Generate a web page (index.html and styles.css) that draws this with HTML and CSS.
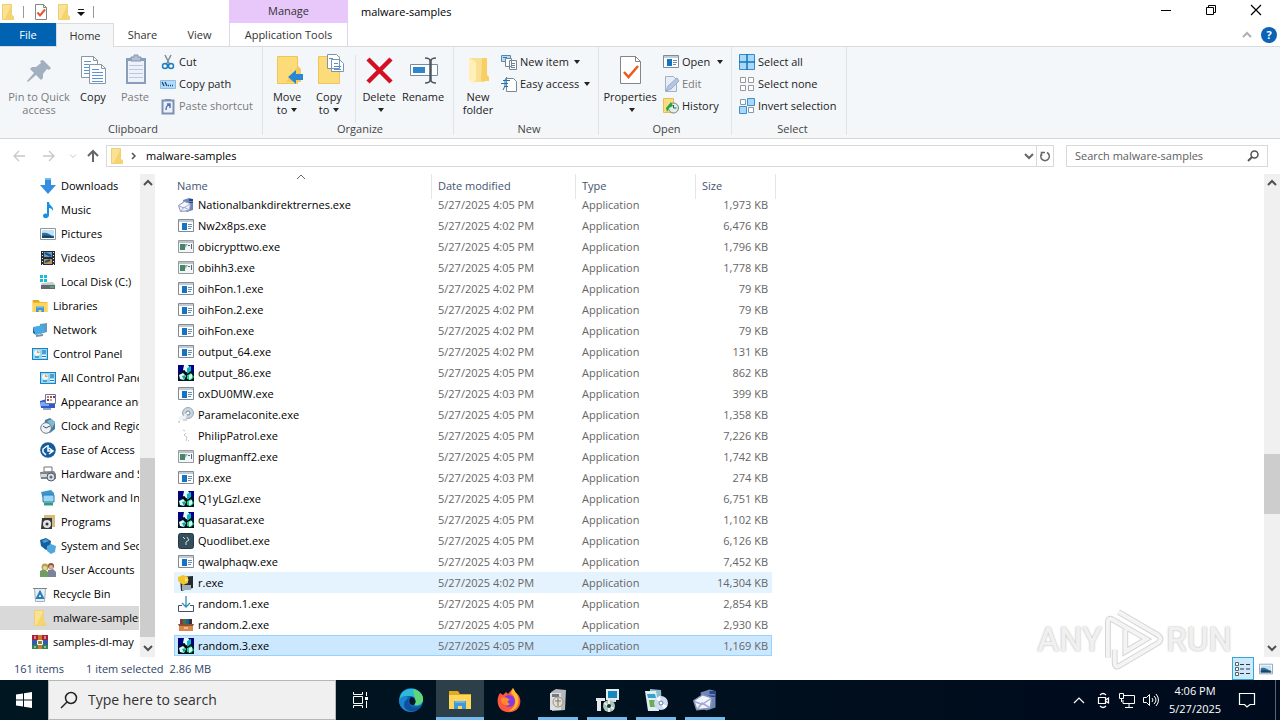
FILE: index.html
```html
<!DOCTYPE html>
<html lang="en">
<head>
<meta charset="utf-8">
<title>malware-samples</title>
<link rel="stylesheet" href="styles.css">
</head>
<body>
<svg class="sprite" aria-hidden="true">
  <symbol id="folder" viewBox="0 0 16 16"><path d="M2.500.5h9v10.500l2 1.500v3h-11z" fill="#fbe293" stroke="#efcf74"/><path d="M11.500 1v11l2 .5v3H4.500z" fill="#f5d36d"/></symbol>
  <symbol id="check" viewBox="0 0 16 16"><path d="M2.500.5h8l3 3v12h-11z" fill="#fff" stroke="#858585"/><path d="M10.500.5v3h3" fill="none" stroke="#858585"/><path d="M4.500 8.500l2.500 3 5-6" fill="none" stroke="#e8552c" stroke-width="2"/></symbol>
  <symbol id="pages" viewBox="0 0 32 32"><g fill="#fff" stroke="#8c97a5"><path d="M4.500 2.500h12l4 4v17h-16z"/><path d="M12.500 10.500h12l4 4v15h-16z"/><path d="M24.500 10.500v4h4M16.500 2.500v4h4" fill="none"/></g><path d="M7 7.500h7M7 10.500h5M7 13.500h5M7 16.500h5M7 19.500h5M15 15.500h7M15 18.500h11M15 21.500h11M15 24.500h11M15 27.500h11" stroke="#5a94d8"/></symbol>
  <symbol id="app" viewBox="0 0 16 16"><path d="M.5 1.500h15v12H.5z" fill="#fff" stroke="#7e8b98"/><path d="M1 2h14v2H1z" fill="#c3cad1"/><path d="M4 5h5v7H4z" fill="#1673c4"/><path d="M10 6.500h4M10 8.500h4M10 10.500h3" stroke="#6a8eae"/></symbol>
  <symbol id="appgreen" viewBox="0 0 16 16"><path d="M.5 1.500h15v12H.5z" fill="#f4f6f5" stroke="#969da2"/><path d="M1 2h14v2H1z" fill="#bcc3c5"/><path d="M2 5h5v6H2z" fill="#47856e"/><path d="M7 5h3L7 9z" fill="#86b6a0"/><path d="M10 6.500h2M13.500 5v5" stroke="#568"/></symbol>
  <symbol id="cubes" viewBox="0 0 16 16"><path d="M0 0h16v16H0z" fill="#000080"/><path d="M0 16V9l6-4 3 3 3-3 4 3v8z" fill="#00121e"/><path d="M6 0h4l3 4-3 4-5-3z" fill="#e8fdff"/><path d="M9 3l4-2v5l-4 3z" fill="#10b5c4"/><path d="M1 10l4-2 3 3-2 4-4-1z" fill="#d6fbff"/><path d="M4 11l4-1-2 5z" fill="#0aa78b"/><path d="M9 10l4-2 3 4-3 3-4-1z" fill="#17d68e"/><path d="M11 10l3-1v4l-3 2z" fill="#d9fff4"/><path d="M6 5l2 5 4-2" stroke="#000" fill="none"/></symbol>
  <symbol id="server" viewBox="0 0 16 16"><path d="M5 3l6-2 4 1v11l-6 2-2-1z" fill="#6d87b8"/><path d="M11 2h4v2h-4zM10 5h5v1h-5z" fill="#27468c"/><path d="M.5 8.500l6-4 6 2-1 7-9 1z" fill="#f3f5fc" stroke="#8794b8"/><path d="M1 9l5 2 6-4M3 14l3-4 5 3" fill="none" stroke="#a1a8cf"/></symbol>
  <symbol id="panel" viewBox="0 0 16 16"><path d="M0 2h16v12H0z" fill="#1c82c5"/><path d="M1 3h14v10H1z" fill="#92d9f7"/><circle cx="5" cy="7" r="3" fill="#eaf8ff"/><path d="M5 7V4l3 3z" fill="#ee9f30"/><path d="M10 5h4M10 7h4M3 11h4" stroke="#185f9b"/><path d="M10 9h4v3h-4z" fill="#fff"/><path d="M10 10.500h4" stroke="#1a76bb"/></symbol>
  <symbol id="disc" viewBox="0 0 16 16"><circle cx="10" cy="6" r="5.500" fill="#cbd5e0" stroke="#9aa9bc"/><circle cx="10" cy="6" r="2" fill="#fff" stroke="#71839d"/><path d="M1 10l8-4-1 6-7 2z" fill="#edf2f7"/><path d="M4 5l2 4M5 13h4M1 14v2" stroke="#a6b1bf"/></symbol>
  <symbol id="picture" viewBox="0 0 16 16"><path d="M.5 2.500h15v11H.5z" fill="#fff" stroke="#8b99a5"/><path d="M2 4h12v8H2z" fill="#bfe2f8"/><path d="M2 7q4-1 7 1t5 2v2H2z" fill="#386e9c"/><path d="M2 10q6-2 12 1v1H2z" fill="#16476a"/></symbol>
  <symbol id="explorer" viewBox="0 0 24 24"><path d="M1 3h9l2 3h11v15H1z" fill="#e6a91d"/><path d="M1 7h22v14H1z" fill="#ffd65c"/><path d="M6 21v-8h12v8h-4v-3h-4v3z" fill="#4199da"/><path d="M7 13h10v2H7z" fill="#67b7ee"/></symbol>
  <symbol id="down" viewBox="0 0 12 12"><path d="M2 4l4 4 4-4" fill="none" stroke="currentColor" stroke-width="2"/></symbol>
  <symbol id="up" viewBox="0 0 12 12"><path d="M2 8l4-4 4 4" fill="none" stroke="currentColor" stroke-width="2"/></symbol>
</svg>

<div class="window">
  <header class="titlebar">
    <div class="quick">
      <svg class="i16"><use href="#folder"/></svg><span class="bar"></span>
      <button class="plain" aria-label="Properties"><svg class="i16"><use href="#check"/></svg></button>
      <button class="plain" aria-label="New folder"><svg class="i16"><use href="#folder"/></svg></button>
      <button class="plain customize" aria-label="Customize toolbar"><svg class="i10" viewBox="0 0 10 10"><path d="M2 2.500h6" stroke="#222"/><path d="M1 5h8L5 9z" fill="#111"/></svg></button><span class="bar"></span>
    </div>
    <div class="manage">Manage</div>
    <h1>malware-samples</h1>
    <div class="winbtns">
      <button class="plain" aria-label="Minimize"><svg class="i12" viewBox="0 0 12 12"><path d="M1 6.500h10" stroke="#000"/></svg></button>
      <button class="plain" aria-label="Restore"><svg class="i12" viewBox="0 0 12 12"><path d="M1.500 3.500h7v7h-7zM3.500 3.500v-2h7v7h-2" fill="none" stroke="#000"/></svg></button>
      <button class="plain" aria-label="Close"><svg class="i12" viewBox="0 0 12 12"><path d="M1 1l10 10M11 1L1 11" stroke="#000" stroke-width="1.200"/></svg></button>
    </div>
  </header>
  <nav class="tabs">
    <button class="file">File</button><button class="home">Home</button><button class="tab">Share</button><button class="tab">View</button><button class="apptools">Application Tools</button>
    <div class="tabs-end">
      <button class="plain" aria-label="Collapse ribbon"><svg class="i12 grey"><use href="#up"/></svg></button>
      <button class="help" aria-label="Help">?</button>
    </div>
  </nav>

  <section class="ribbon">
    <div class="group clipboard">
      <div class="tools">
        <button class="big w70 off"><svg class="i32" viewBox="0 0 32 32"><path d="M20 6l8 8-2 2-2-1-4 5 0 4-2 2-5-5-8 7-1-1 7-8-4-4 2-2 4 0 5-4-1-2z" fill="#a2afc0"/></svg><span>Pin to Quick<br>access</span></button>
        <button class="big w38"><svg class="i32"><use href="#pages"/></svg><span>Copy</span></button>
        <button class="big w46 off"><svg class="i32" viewBox="0 0 32 32"><path d="M7 4h20v26H7z" fill="#8a9dbb"/><path d="M9 7h16v21H9z" fill="#edf2fa"/><path d="M12 3h3V1h4v2h3v4H12z" fill="#b2bfd2" stroke="#8395b1"/><path d="M10 11.500h14M10 15.500h14M10 19.500h14M10 23.500h14" stroke="#bdcadd"/></svg><span>Paste</span></button>
        <div class="smalls">
          <button class="small"><svg class="i16" viewBox="0 0 16 16"><path d="M5 1l5 10M11 1L6 11" stroke="#7e8d9c" stroke-width="1.500"/><circle cx="5" cy="12" r="2.500" fill="none" stroke="#1d81bf" stroke-width="1.500"/><circle cx="11" cy="12" r="2.500" fill="none" stroke="#1d81bf" stroke-width="1.500"/></svg>Cut</button>
          <button class="small"><svg class="i16" viewBox="0 0 16 16"><path d="M.5 4.500h15v8H.5z" fill="#b6dafa" stroke="#8dbce4"/><path d="M2 6l2 4M5 6l2 4M8 9.500h1M10 9.500h1M12 9.500h1" stroke="#174b79" stroke-width="1.300"/></svg>Copy path</button>
          <button class="small off"><svg class="i16" viewBox="0 0 16 16"><path d="M2.500 2.500h11v13h-11z" fill="#eaf0fb" stroke="#7f91b3" stroke-width="2"/><path d="M5 1h6v2H5z" fill="#7f91b3"/><path d="M6 12c0-4 1-5 4-5M7 6h3v4" fill="none" stroke="#5275aa" stroke-width="1.500"/></svg>Paste shortcut</button>
        </div>
      </div><h2>Clipboard</h2>
    </div>
    <div class="group organize">
      <div class="tools">
        <button class="big w40"><svg class="i32" viewBox="0 0 32 32"><path d="M6.500 2.500h20v27h-20z" fill="#fbdc79" stroke="#edc55b"/><path d="M27 12l3 3v13H15z" fill="#f4ca60"/><path d="M17 23l8-7v4h7v6h-7v4z" fill="#2b88d0"/></svg><span>Move<br>to<i class="caret"></i></span></button>
        <button class="big w44"><svg class="i32" viewBox="0 0 32 32"><path d="M5.500 2.500h21v27h-21z" fill="#fbdc79" stroke="#edc55b"/><g fill="#fff" stroke="#7c95ae"><path d="M14.500.5h9l3 3v11h-12zM18.500 5.500h8l4 4v8h-12z"/></g><path d="M21 9.500h4M21 12.500h7M21 15.500h7M16 4.500h4" stroke="#4e91d6"/></svg><span>Copy<br>to<i class="caret"></i></span></button>
        <span class="divider"></span>
        <button class="big w42"><svg class="i32" viewBox="0 0 32 32"><path d="M5 5l23 23M28 5L5 28" stroke="#d40f22" stroke-width="4.500"/></svg><span>Delete<br><i class="caret"></i></span></button>
        <button class="big w46"><svg class="i32" viewBox="0 0 32 32"><path d="M3.500 10.500h27v11h-27z" fill="#fff" stroke="#728ca3"/><path d="M6 13h12v6H6z" fill="#2e86cc"/><path d="M18 4q5 0 5 3v19q0 3-5 3M29 4q-5 0-5 3v19q0 3 5 3" fill="none" stroke="#4e5862" stroke-width="1.500"/></svg><span>Rename</span></button>
      </div><h2>Organize</h2>
    </div>
    <div class="group new">
      <div class="tools">
        <button class="big w36"><svg class="i32" viewBox="0 0 32 32"><path d="M7 4h16v24H11z" fill="#fae094"/><path d="M20 4h5v17l2 2v4h-8z" fill="#f8cf62"/><path d="M7 4v22l5 4 2-5V8z" fill="#fff0b8"/></svg><span>New<br>folder</span></button>
        <div class="smalls">
          <button class="small"><svg class="i16" viewBox="0 0 16 16"><path d="M.5 1.500h9v6h-9z" fill="#b9dcf5" stroke="#5686ac"/><path d="M2 3.500h4" stroke="#327bb5"/><path d="M4.500 4.500h6v8h-6zM8.500 6.500h7v9h-7z" fill="#fff" stroke="#768593"/><path d="M10 9.500h4M10 11.500h4M10 13.500h4" stroke="#6d8296"/></svg>New item<i class="caret"></i></button>
          <button class="small"><svg class="i16" viewBox="0 0 16 16"><path d="M5.500 2.500h7l3 3v10h-10z" fill="#fff" stroke="#7a8998"/><path d="M2 4.500h7M0 7.500h7M3 10.500h4M6 1L4 4v6l-2 4" fill="none" stroke="#2673b4"/></svg>Easy access<i class="caret"></i></button>
        </div>
      </div><h2>New</h2>
    </div>
    <div class="group open">
      <div class="tools">
        <button class="big w56"><svg class="i32" viewBox="0 0 32 32"><path d="M6.500 2.500h15l5 5v22h-20z" fill="#fff" stroke="#858585"/><path d="M21.500 2.500v5h5" fill="none" stroke="#858585"/><path d="M10 18l4.500 5L24 12" fill="none" stroke="#ea5b1c" stroke-width="2.500"/></svg><span>Properties<br><i class="caret"></i></span></button>
        <div class="smalls">
          <button class="small"><svg class="i16"><use href="#app"/></svg>Open<i class="caret wide"></i></button>
          <button class="small off"><svg class="i16" viewBox="0 0 16 16"><path d="M2.500.5h8l3 3v12h-11z" fill="#e6edf7" stroke="#a0b1ca"/><path d="M3 15l2-5 9-8 2 3-8 8z" fill="#b6c6df" stroke="#99abc8"/></svg>Edit</button>
          <button class="small"><svg class="i16" viewBox="0 0 16 16"><path d="M.5.5h10v14H.5z" fill="#fbdd80" stroke="#e6bd57"/><circle cx="10.500" cy="10" r="5" fill="#e0eee8" stroke="#73827c"/><path d="M8 4L3 10l1 4 2-4 4-2z" fill="#27a444"/><path d="M10.500 7v3h3" fill="none" stroke="#3e5b4a"/></svg>History</button>
        </div>
      </div><h2>Open</h2>
    </div>
    <div class="group select">
      <div class="tools"><div class="smalls">
        <button class="small"><svg class="i16" viewBox="0 0 16 16"><path d="M.5.5h15v15H.5z" fill="#a9d9f9" stroke="#368ac9"/><path d="M8 0v16M0 8h16" stroke="#1674b9" stroke-width="1.500"/></svg>Select all</button>
        <button class="small"><svg class="i16" viewBox="0 0 16 16"><path d="M1.500 1.500h5v5h-5zM9.500 1.500h5v5h-5zM1.500 9.500h5v5h-5zM9.500 9.500h5v5h-5z" fill="#fff" stroke="#999"/></svg>Select none</button>
        <button class="small"><svg class="i16" viewBox="0 0 16 16"><path d="M8.500.5h7v7h-7zM.5 8.500h7v7h-7z" fill="#acd8f5" stroke="#3b8fcd"/><path d="M1.500 1.500h5v5h-5zM9.500 9.500h5v5h-5z" fill="#fff" stroke="#8499ab"/></svg>Invert selection</button>
      </div></div><h2>Select</h2>
    </div>
  </section>

  <div class="address">
    <div class="navbtns">
      <button class="plain" aria-label="Back"><svg class="i14" viewBox="0 0 14 14"><path d="M13 7H2M7 2L2 7l5 5" fill="none" stroke="#c8c8c8" stroke-width="1.300"/></svg></button>
      <button class="plain" aria-label="Forward"><svg class="i14" viewBox="0 0 14 14"><path d="M1 7h11M7 2l5 5-5 5" fill="none" stroke="#c8c8c8" stroke-width="1.300"/></svg></button>
      <button class="plain" aria-label="Recent"><svg class="i8" viewBox="0 0 8 8"><path d="M1 2.500l3 3 3-3" fill="none" stroke="#c8c8c8"/></svg></button>
      <button class="plain" aria-label="Up"><svg class="i14" viewBox="0 0 14 14"><path d="M7 13V2M2 7l5-5 5 5" fill="none" stroke="#666" stroke-width="2"/></svg></button>
    </div>
    <div class="path">
      <svg class="i16"><use href="#folder"/></svg>
      <svg class="i8" viewBox="0 0 8 8"><path d="M2 1l3 3-3 3" fill="none" stroke="#555" stroke-width="1.500"/></svg>
      <a href="#list">malware-samples</a>
      <button class="plain" aria-label="Previous locations"><svg class="i12"><use href="#down"/></svg></button>
      <button class="refresh" aria-label="Refresh"><svg class="i12" viewBox="0 0 12 12"><path d="M8 2.500a4.300 4.300 0 1 1-5 .8M2.500 6V2.500H6" fill="none" stroke="#666" stroke-width="1.500"/></svg></button>
    </div>
    <div class="search">
      <input type="search" aria-label="Search malware-samples" placeholder="Search malware-samples">
      <svg class="i12" viewBox="0 0 12 12"><circle cx="7.500" cy="4.500" r="3.500" fill="none" stroke="#555" stroke-width="1.500"/><path d="M5 7L1 11" stroke="#555" stroke-width="2"/></svg>
    </div>
  </div>

  <main>
    <nav class="side">
      <a href="#list" class="sub"><svg class="i16" viewBox="0 0 16 16"><path d="M5 0h6v7h5l-8 9-8-9h5z" fill="#3490df"/><path d="M5 0h6v2H5z" fill="#73b8ee"/></svg>Downloads</a>
      <a href="#list" class="sub"><svg class="i16" viewBox="0 0 16 16"><path d="M7 0h2c0 4 5 4 4 9-1-3-4-3-4-3v7c0 4-6 4-6 1 0-2 2-3 4-2z" fill="#1590e6"/></svg>Music</a>
      <a href="#list" class="sub"><svg class="i16"><use href="#picture"/></svg>Pictures</a>
      <a href="#list" class="sub"><svg class="i16" viewBox="0 0 16 16"><path d="M1 1h14v14H1z" fill="#222c37"/><path d="M4 2h8v5H4z" fill="#63a1c5"/><path d="M4 9h8v5H4z" fill="#c29350"/><path d="M5 3l6 3M5 12l5-2" stroke="#244d7e" stroke-width="2"/><path d="M2.500 2v13M13.500 2v13" stroke="#eee" stroke-dasharray="1 2"/></svg>Videos</a>
      <a href="#list" class="sub"><svg class="i16" viewBox="0 0 16 16"><path d="M0 1h3v3H0zM4 1h3v3H4zM0 5h3v3H0zM4 5h3v3H4z" fill="#16bdd7"/><path d="M2 9l11-1 2 3H1z" fill="#c3c9cc"/><path d="M1 11h14v4H1z" fill="#606a70"/><path d="M10 13h4" stroke="#48e573"/></svg>Local Disk (C:)</a>
      <a href="#list"><svg class="i16"><use href="#explorer"/></svg>Libraries</a>
      <a href="#list"><svg class="i16" viewBox="0 0 16 16"><path d="M8 2l7-1v9l-7 2z" fill="#5f9ac1"/><path d="M1 5l10-2 2 7-9 3z" fill="#46aae7"/><path d="M1 5l3 8-3-2z" fill="#206799"/><path d="M4 14l7-1" stroke="#79909f" stroke-width="2"/></svg>Network</a>
      <a href="#list"><svg class="i16"><use href="#panel"/></svg>Control Panel</a>
      <a href="#list" class="sub"><svg class="i16"><use href="#panel"/></svg>All Control Panel Items</a>
      <a href="#list" class="sub"><svg class="i16" viewBox="0 0 16 16"><path d="M0 7l7-2 8 5v4H1z" fill="#3259ca"/><path d="M1 8h8v4H1z" fill="#79a8fa"/><path d="M5.500.5h10v9h-10z" fill="#fff" stroke="#6f759a"/><path d="M7 2h2v2H7z" fill="#d27830"/><path d="M10 2h2v2h-2z" fill="#b2503e"/><path d="M13 2h2v2h-2zM7 5h2v2H7z" fill="#744298"/><path d="M10 5h2v2h-2z" fill="#e9a23a"/><path d="M3 15h8" stroke="#30479a"/></svg>Appearance and Personalization</a>
      <a href="#list" class="sub"><svg class="i16" viewBox="0 0 16 16"><path d="M5 2l5-2 5 4v7l-5 4-6-4z" fill="#407da4"/><path d="M7 3l5-2 3 4-3 5z" fill="#82bad0"/><circle cx="6" cy="10" r="5.300" fill="#edf3f6" stroke="#70828d"/><path d="M3 8l3 2 4-2" fill="none" stroke="#456"/></svg>Clock and Region</a>
      <a href="#list" class="sub"><svg class="i16" viewBox="0 0 16 16"><circle cx="8" cy="8" r="7.800" fill="#145c9b"/><path d="M8 3v6h5M9 6l4 3-4 3M7 4l-4 3v3l3 3" fill="none" stroke="#fff" stroke-width="1.500"/></svg>Ease of Access</a>
      <a href="#list" class="sub"><svg class="i16" viewBox="0 0 16 16"><path d="M4 1h8v5H4z" fill="#fff" stroke="#6e7478"/><path d="M0 6l14-1 2 3v5H1z" fill="#7d858b"/><path d="M1 8h6v3H1z" fill="#d5d9dc"/><circle cx="11" cy="11" r="4" fill="#d9e0e4" stroke="#4f5c67"/><circle cx="11" cy="11" r="1.500" fill="#668"/></svg>Hardware and Sound</a>
      <a href="#list" class="sub"><svg class="i16" viewBox="0 0 16 16"><path d="M1 2l10-2 3 3v6H3z" fill="#3c96cb"/><path d="M3 5h11v7H3z" fill="#9ed7f6" stroke="#267db4"/><path d="M4 14h9" stroke="#379a80" stroke-width="3"/></svg>Network and Internet</a>
      <a href="#list" class="sub"><svg class="i16" viewBox="0 0 16 16"><path d="M4 1h11v12H4z" fill="#d7ba7c"/><path d="M2 4h10v11H1z" fill="#343838"/><circle cx="7" cy="10" r="4" fill="#e1e3e5"/><circle cx="7" cy="10" r="1.500" fill="#333"/></svg>Programs</a>
      <a href="#list" class="sub"><svg class="i16" viewBox="0 0 16 16"><path d="M0 2l6-2 5 3-1 7-4 2-5-4z" fill="#145f9f"/><path d="M7 8l4-2 5 2-1 6-4 2-4-3z" fill="#4fa7dc"/><path d="M2 3l4-2 3 2-5 2z" fill="#4c9dd3"/></svg>System and Security</a>
      <a href="#list" class="sub"><svg class="i16" viewBox="0 0 16 16"><circle cx="5" cy="5" r="3.500" fill="#b4a05d"/><path d="M0 15V9l4-2 4 3v5z" fill="#709e60"/><circle cx="11" cy="4" r="3" fill="#8a5740"/><path d="M8 8l5-1 3 3v5H8z" fill="#7c8395"/><circle cx="11" cy="5" r="2" fill="#e5b190"/><circle cx="5" cy="6" r="2" fill="#f0d59b"/></svg>User Accounts</a>
      <a href="#list"><svg class="i16" viewBox="0 0 16 16"><path d="M2.500 2.500h11l-1 13h-9z" fill="#e8eef2" stroke="#a4b0b8"/><path d="M1 2.500h14" stroke="#78858d"/><path d="M8 6l3 6H5z" fill="none" stroke="#287fb9" stroke-width="2"/></svg>Recycle Bin</a>
      <a href="#list" class="current"><svg class="i16"><use href="#folder"/></svg>malware-samples</a>
      <a href="#list"><svg class="i16" viewBox="0 0 16 16"><path d="M0 1h16v5H0z" fill="#a91f35"/><path d="M0 6h16v5H0z" fill="#355ba9"/><path d="M0 11h16v4H0z" fill="#318849"/><path d="M6 1h4v14H6z" fill="#cf7a28"/><path d="M5.500 6.500h5v4h-5z" fill="#883" stroke="#fff"/><path d="M3 2v3M13 2v3M3 12v2M13 12v2" stroke="#eee"/></svg>samples-dl-may</a>
    </nav>
    <div class="scroll side-scroll"><svg class="i12"><use href="#up"/></svg><span class="track"></span><span class="thumb"></span><svg class="i12"><use href="#down"/></svg></div>
    <section class="list" id="list">
      <table>
        <colgroup><col class="c-name"><col class="c-date"><col class="c-type"><col class="c-size"></colgroup>
        <thead><tr><th><span>Name</span><svg class="sort i10" viewBox="0 0 10 10"><path d="M1 7l4-4 4 4" fill="none" stroke="#666"/></svg></th><th>Date modified</th><th>Type</th><th>Size</th></tr></thead>
        <tbody>
        <tr><td><svg class="i16"><use href="#server"/></svg>Nationalbankdirektrernes.exe</td><td>5/27/2025 4:05 PM</td><td>Application</td><td>1,973 KB</td></tr>
        <tr><td><svg class="i16"><use href="#app"/></svg>Nw2x8ps.exe</td><td>5/27/2025 4:02 PM</td><td>Application</td><td>6,476 KB</td></tr>
        <tr><td><svg class="i16"><use href="#appgreen"/></svg>obicrypttwo.exe</td><td>5/27/2025 4:05 PM</td><td>Application</td><td>1,796 KB</td></tr>
        <tr><td><svg class="i16"><use href="#appgreen"/></svg>obihh3.exe</td><td>5/27/2025 4:05 PM</td><td>Application</td><td>1,778 KB</td></tr>
        <tr><td><svg class="i16"><use href="#app"/></svg>oihFon.1.exe</td><td>5/27/2025 4:02 PM</td><td>Application</td><td>79 KB</td></tr>
        <tr><td><svg class="i16"><use href="#app"/></svg>oihFon.2.exe</td><td>5/27/2025 4:02 PM</td><td>Application</td><td>79 KB</td></tr>
        <tr><td><svg class="i16"><use href="#app"/></svg>oihFon.exe</td><td>5/27/2025 4:02 PM</td><td>Application</td><td>79 KB</td></tr>
        <tr><td><svg class="i16"><use href="#app"/></svg>output_64.exe</td><td>5/27/2025 4:02 PM</td><td>Application</td><td>131 KB</td></tr>
        <tr><td><svg class="i16"><use href="#cubes"/></svg>output_86.exe</td><td>5/27/2025 4:05 PM</td><td>Application</td><td>862 KB</td></tr>
        <tr><td><svg class="i16"><use href="#app"/></svg>oxDU0MW.exe</td><td>5/27/2025 4:03 PM</td><td>Application</td><td>399 KB</td></tr>
        <tr><td><svg class="i16"><use href="#disc"/></svg>Paramelaconite.exe</td><td>5/27/2025 4:05 PM</td><td>Application</td><td>1,358 KB</td></tr>
        <tr><td><svg class="i16" viewBox="0 0 16 16"><path d="M5 2l2 1M8 5l-2 2 3 2-1 4M10 13l1-1" fill="none" stroke="#c5c5c5"/></svg>PhilipPatrol.exe</td><td>5/27/2025 4:05 PM</td><td>Application</td><td>7,226 KB</td></tr>
        <tr><td><svg class="i16"><use href="#appgreen"/></svg>plugmanff2.exe</td><td>5/27/2025 4:05 PM</td><td>Application</td><td>1,742 KB</td></tr>
        <tr><td><svg class="i16"><use href="#app"/></svg>px.exe</td><td>5/27/2025 4:03 PM</td><td>Application</td><td>274 KB</td></tr>
        <tr><td><svg class="i16"><use href="#cubes"/></svg>Q1yLGzl.exe</td><td>5/27/2025 4:05 PM</td><td>Application</td><td>6,751 KB</td></tr>
        <tr><td><svg class="i16"><use href="#cubes"/></svg>quasarat.exe</td><td>5/27/2025 4:05 PM</td><td>Application</td><td>1,102 KB</td></tr>
        <tr><td><svg class="i16" viewBox="0 0 16 16"><rect x=".5" y=".5" width="15" height="15" rx="2" fill="#344e5c" stroke="#203844"/><path d="M5 4l2 2M9 4l2 3-3 2v3" fill="none" stroke="#d3e0e7"/></svg>Quodlibet.exe</td><td>5/27/2025 4:05 PM</td><td>Application</td><td>6,126 KB</td></tr>
        <tr><td><svg class="i16"><use href="#app"/></svg>qwalphaqw.exe</td><td>5/27/2025 4:03 PM</td><td>Application</td><td>7,452 KB</td></tr>
        <tr class="hover"><td><svg class="i16" viewBox="0 0 16 16"><path d="M2 2l13-1v12l-12 3z" fill="#242a30"/><path d="M4 10h9v5H4z" fill="#9faebc"/><path d="M0 2l5-2 5 2v6l-5 2-5-4z" fill="#f2c52b"/><path d="M7 2l4 3-4 2z" fill="#fbe577"/></svg>r.exe</td><td>5/27/2025 4:02 PM</td><td>Application</td><td>14,304 KB</td></tr>
        <tr><td><svg class="i16" viewBox="0 0 16 16"><path d="M4 9.500H.5v6h15v-6H12" fill="#fff" stroke="#435264"/><path d="M8 0v11M4 7l4 4 4-4" fill="none" stroke="#348bb9" stroke-width="1.300"/></svg>random.1.exe</td><td>5/27/2025 4:05 PM</td><td>Application</td><td>2,854 KB</td></tr>
        <tr><td><svg class="i16" viewBox="0 0 16 16"><path d="M2 2h3v6H2z" fill="#993144"/><path d="M5 2h3v6H5z" fill="#238443"/><path d="M8 2h3v6H8z" fill="#285b9f"/><path d="M11 2h3v6h-3z" fill="#333"/><path d="M0 7h16l-1 2H1z" fill="#8d512c"/><path d="M1 9h14v5H1z" fill="#d8864d"/><path d="M6 11h4" stroke="#fff1cc"/></svg>random.2.exe</td><td>5/27/2025 4:05 PM</td><td>Application</td><td>2,930 KB</td></tr>
        <tr class="selected"><td><svg class="i16"><use href="#cubes"/></svg>random.3.exe</td><td>5/27/2025 4:05 PM</td><td>Application</td><td>1,169 KB</td></tr>
        </tbody>
      </table>
    </section>
    <div class="scroll list-scroll"><svg class="i12"><use href="#up"/></svg><span class="track"></span><span class="thumb"></span><span class="track after"></span><svg class="i12"><use href="#down"/></svg></div>
    <div class="watermark"><span>ANY</span><svg viewBox="0 0 58 64"><path d="M13 3L54 27q5 4 0 8L15 58q-6 4-6-3V42M2 50V14q0-6 5-3L42 31 20 44V21" fill="none" stroke="#d4d4d4" stroke-width="6"/><path d="M13 3L54 27q5 4 0 8L15 58q-6 4-6-3V42M2 50V14q0-6 5-3L42 31 20 44V21" fill="none" stroke="#f4f4f4" stroke-width="4"/></svg><span>RUN</span></div>
  </main>

  <footer class="status">
    <span>161 items</span><span class="picked">1 item selected</span><span>2.86 MB</span>
    <div class="views">
      <button class="on" aria-label="Details view"><svg class="i16" viewBox="0 0 16 16"><path d="M.5 1.500h3v3h-3zM.5 6.500h3v3h-3zM.5 11.500h3v3h-3z" fill="#fff" stroke="#53636c"/><path d="M5 3.500h4M11 3.500h4M5 8h4M11 8h4M5 12.500h4M11 12.500h4" stroke="#334"/></svg></button>
      <button aria-label="Thumbnails view"><svg class="i14"><use href="#picture"/></svg></button>
    </div>
  </footer>
</div>

<footer class="taskbar">
  <button class="start" aria-label="Start"><svg class="i16" viewBox="0 0 16 16"><path d="M0 2.500l7-1v6H0zM8 1.300L16 0v7.500H8zM0 8.500h7v6l-7-1zM8 8.500h8V16l-8-1.300z" fill="#fff"/></svg></button>
  <div class="tasksearch"><svg class="i18" viewBox="0 0 18 18"><circle cx="11" cy="7" r="5.500" fill="none" stroke="#222" stroke-width="1.500"/><path d="M7 11l-6 6" stroke="#222" stroke-width="1.500"/></svg><input type="text" aria-label="Type here to search" placeholder="Type here to search"></div>
  <button class="start" aria-label="Task view"><svg class="i18" viewBox="0 0 18 18"><path d="M2.500 5.500h9v7h-9zM2.500 1v2.500h9V1M2.500 17v-2.500h9V17M15.500 1v4M15.500 10v7" fill="none" stroke="#fff"/><path d="M14 6h3v3h-3z" fill="#fff"/></svg></button>
  <div class="apps">
    <button aria-label="Edge"><svg class="i24" viewBox="0 0 24 24"><circle cx="12" cy="12" r="12" fill="#0c63b7"/><path d="M1 9C3-1 20-3 24 10c1 6-4 9-9 7 4-3 2-9-4-9C6 8 3 9 0 13z" fill="#2eb9d4"/><path d="M14 1c6 1 11 6 10 11-1 4-5 6-9 5 2-2 2-4 1-6z" fill="#5fd777"/><path d="M9 9c-4 6 0 13 7 14C8 26 0 20 0 13c1-4 5-6 9-4z" fill="#1884d2"/><path d="M15 17c-5 1-6-5-3-8 4 0 6 5 3 8z" fill="#04182a"/><path d="M10 10c-3 7 4 13 12 8-3 5-9 7-14 4-5-4-3-10 2-12z" fill="#134e9a"/></svg></button>
    <button class="active" aria-label="File Explorer"><svg class="i24"><use href="#explorer"/></svg></button>
    <button aria-label="Firefox"><svg class="i24" viewBox="0 0 24 24"><path d="M3 5l3 2 3-3 2 2 5-6 2 4c5 3 6 8 5 12-2 11-20 11-22 0C0 12 1 8 3 5z" fill="#ff583e"/><path d="M14 5l2-5 3 5c6 8 1 18-7 18 8-5 8-12 2-18z" fill="#ffbd2d"/><circle cx="12" cy="13" r="6" fill="#843ae3"/><path d="M4 10c4-2 7 0 9 2-3 0-3 3 0 4-4 4-9 0-9-6z" fill="#ff8b2a"/></svg></button>
    <button class="run" aria-label="Archive"><svg class="i24" viewBox="0 0 24 24"><path d="M5 4l5-3 10 1-1 20-13 1z" fill="#b6b8bc"/><path d="M4 5h11v17H4z" fill="#dedede"/><path d="M6 6h7v3H6z" fill="#737a83"/><circle cx="12" cy="14" r="5" fill="#e4dfcd" stroke="#94928c"/><path d="M12 10v8M9 13h6" stroke="#777"/></svg></button>
    <button class="run" aria-label="Installer"><svg class="i24" viewBox="0 0 24 24"><path d="M11 1h13v11H11z" fill="#e3ebee"/><path d="M13 3h9v7h-9z" fill="#1688bc"/><path d="M14 12h7v2h-7z" fill="#ddd"/><path d="M2 11h4v12H2zM1 10h9v3H1z" fill="#e7e7e7"/><circle cx="14" cy="18" r="6" fill="#a9c6b8"/><path d="M14 12v12M9 15l10 6" stroke="#eee" stroke-width="2"/><circle cx="14" cy="18" r="2" fill="#143b34"/></svg></button>
    <button class="run" aria-label="Setup"><svg class="i24" viewBox="0 0 24 24"><path d="M6 1l11 1 1 18-12 2z" fill="#8fbad4"/><path d="M1 3h11l3 20H4z" fill="#e2edf2"/><path d="M3 6h8l1 4H4z" fill="#36a3cb"/><path d="M5 12h6l1 7H6z" fill="#68af54"/><circle cx="17" cy="15" r="7" fill="#cedbf3"/><path d="M17 15l-5-4 4-3zM17 15l6 3-3 3z" fill="#fff"/><circle cx="17" cy="15" r="2" fill="#fff" stroke="#637f9c"/></svg></button>
    <button class="run" aria-label="Mail server"><svg class="i24"><use href="#server"/></svg></button>
  </div>
  <div class="tray">
    <svg class="i12" viewBox="0 0 12 12"><path d="M1 9l5-5 5 5" fill="none" stroke="#fff" stroke-width="1.200"/></svg>
    <svg class="i16" viewBox="0 0 16 16"><path d="M3.500 5.500h7v6h-7zM10.500 8l3-2v5l-3-2M5 3q3-3 6 0M5 14q3 3 6 0" fill="none" stroke="#fff" stroke-width="1.200"/></svg>
    <svg class="i16" viewBox="0 0 16 16"><path d="M5 3.500h10.500v8H4V8M10 12v3M6 15.500h8M.5 1.500h4v5h-4zM2.500 6v4" fill="none" stroke="#fff"/></svg>
    <svg class="i16" viewBox="0 0 16 16"><path d="M.5 5.500h3l3-3v11l-3-3h-3zM9 6q2 2 0 4M11 4q4 4 0 8M13 2q5 6 0 12" fill="none" stroke="#fff"/></svg>
    <div class="clock"><time>4:06 PM</time><time>5/27/2025</time></div>
    <svg class="i16 notif" viewBox="0 0 16 16"><path d="M.5 1.500h15v11H11L8 15l-2.500-2.500h-5z" fill="none" stroke="#fff" stroke-width="1.200"/></svg>
  </div>
</footer>
</body>
</html>
```
FILE: styles.css
```css
* { box-sizing: border-box; }
body { margin: 0; min-height: 100vh; display: flex; flex-direction: column; background: #fff; color: #000; font: 11px/16px "Open Sans", "Noto Sans", sans-serif; overflow: hidden; }
button { font: inherit; color: inherit; border: 0; background: none; padding: 0; }
a { color: inherit; text-decoration: none; }
h1, h2 { margin: 0; font-size: 11px; font-weight: 400; }
svg { flex: none; display: block; overflow: visible; }
.sprite { position: absolute; width: 0; height: 0; }
.i8 { width: 8px; height: 8px; } .i10 { width: 10px; height: 10px; } .i12 { width: 12px; height: 12px; }
.i14 { width: 14px; height: 14px; } .i16 { width: 16px; height: 16px; } .i18 { width: 18px; height: 18px; }
.i24 { width: 24px; height: 24px; } .i32 { width: 32px; height: 32px; }
.grey { color: #b0b0b0; }
.plain { display: flex; align-items: center; justify-content: center; }
.window { flex: 1; display: flex; flex-direction: column; }

.titlebar { display: flex; height: 23px; }
.quick { display: flex; align-items: center; width: 229px; gap: 7px; }
.quick .bar { width: 1px; height: 12px; background: #999; margin-right: 2px; }
.quick .bar:last-child { margin: 0; }
.quick .customize { margin-left: -3px; }
.manage { width: 119px; background: #e8c8fb; text-align: center; padding-top: 3px; color: #333; }
h1 { padding: 4px 0 0 13px; }
.winbtns { margin-left: auto; display: flex; height: 20px; padding-right: 2px; }
.winbtns button { width: 45px; }
.tabs { display: flex; height: 24px; border-bottom: 1px solid #dadbdc; color: #333; }
.file { width: 56px; background: #0063b1; color: #fff; }
.home { width: 58px; background: #f5f6f7; border: 1px solid #dadbdc; border-bottom: 0; height: 24px; }
.tab { width: 57px; }
.apptools { width: 119px; margin-left: 1px; border: solid #e4d3ee; border-width: 0 1px; }
.tabs-end { margin-left: auto; display: flex; align-items: center; gap: 8px; padding-right: 3px; }
.help { width: 16px; height: 16px; border-radius: 50%; background: #0a63b5; color: #fff; font-weight: 700; line-height: 16px; }

.ribbon { display: flex; height: 92px; background: linear-gradient(#f4f7fa 88%, #f5f6f7 88%); border-bottom: 1px solid #d5d6d7; color: #222; }
.group { display: flex; flex-direction: column; border-right: 1px solid #e1e4e7; margin-bottom: 3px; }
.group h2 { text-align: center; color: #444; line-height: 12px; }
.tools { display: flex; height: 77px; }
.clipboard { width: 263px; padding-left: 4px; } .organize { width: 191px; padding-left: 4px; }
.new { width: 145px; padding-left: 6px; } .open { width: 133px; padding-left: 3px; } .select { width: 115px; padding-left: 7px; }
.big { display: flex; flex-direction: column; align-items: center; padding-top: 7px; line-height: 13px; white-space: nowrap; }
.big span { padding-top: 4px; }
.w36 { width: 36px; } .w38 { width: 38px; } .w40 { width: 40px; } .w42 { width: 42px; } .w44 { width: 44px; }
.w46 { width: 46px; } .w56 { width: 56px; } .w70 { width: 70px; }
.off { color: #7a7a7a; }
.smalls { display: flex; flex-direction: column; padding-top: 4px; }
.big + .smalls { margin-left: 5px; }
.clipboard .smalls { margin-left: 2px; }
.small { display: flex; align-items: center; height: 22px; gap: 3px; white-space: nowrap; }
.caret { display: inline-block; border: solid transparent; border-width: 4px 3px 0; border-top-color: #222; margin-left: 4px; vertical-align: 2px; }
.small .caret { margin-left: 2px; }
.small .wide { margin-left: 4px; }
.divider { width: 1px; margin: 8px 2px 0 4px; background: #e1e4e7; }

.address { display: flex; height: 35px; align-items: center; padding: 0 12px 1px; }
.navbtns { display: flex; align-items: center; width: 94px; }
.navbtns button { height: 22px; width: 14px; }
.navbtns button + button { margin-left: 16px; }
.navbtns button:nth-child(3) { margin-left: 13px; width: 8px; }
.navbtns button:nth-child(4) { margin-left: 9px; }
.path { flex: 1; display: flex; align-items: center; height: 22px; border: 1px solid #d9d9d9; padding-left: 2px; color: #666; }
.path a { flex: 1; color: #000; padding-left: 8px; }
.path .i8 { margin-left: 5px; }
.refresh { width: 17px; height: 20px; display: flex; align-items: center; justify-content: center; border-left: 1px solid #d9d9d9; margin-left: 1px; }
.search { display: flex; align-items: center; width: 202px; height: 22px; margin-left: 12px; padding: 0 8px; border: 1px solid #d9d9d9; }
input { flex: 1; min-width: 0; border: 0; padding: 0; outline: 0; background: none; font: inherit; color: #333; }
input::placeholder { color: #5e5e5e; opacity: 1; }

main { flex: 1; display: flex; position: relative; }
.side { width: 140px; padding-right: 1px; overflow: hidden; }
.side a { display: flex; align-items: center; gap: 5px; height: 24px; padding-left: 32px; white-space: nowrap; overflow: hidden; }
.side .sub { padding-left: 40px; }
.side .current { background: #d9d9d9; }
.scroll { width: 15px; background: #f0f0f0; color: #505050; display: flex; flex-direction: column; align-items: center; padding: 3px 0; }
.thumb { width: 100%; background: #cdcdcd; }
.track { flex: 269; }
.side-scroll .thumb { flex: 179; margin-bottom: 5px; }
.list-scroll { width: 16px; }
.list-scroll .track { flex: 265; } .list-scroll .thumb { flex: 60; } .list-scroll .after { flex: 128; }
.list { flex: 1; padding-left: 19px; }
table { border-collapse: collapse; table-layout: fixed; width: 598px; }
.c-name { width: 258px; } .c-date { width: 144px; } .c-type { width: 120px; } .c-size { width: 76px; }
thead tr { height: 20px; }
th { position: relative; height: 20px; padding: 4px 0 0 6px; text-align: left; font-weight: 400; color: #44546f; line-height: 16px; }
th:first-child { padding-left: 3px; }
th::after { content: ""; position: absolute; top: 0; right: 0; width: 1px; height: 25px; background: #e3e5e8; }
th:last-child::after { right: -4px; }
.sort { position: absolute; top: -2px; left: 122px; }
td { height: 21px; padding: 0 0 0 6px; color: #666; white-space: nowrap; line-height: 16px; }
td:first-child { display: flex; align-items: center; gap: 4px; padding-left: 4px; color: #000; }
td:last-child { text-align: right; padding-right: 4px; }
.hover { background: #e5f3ff; }
.selected { background: #cce8ff; outline: 1px solid #99d1ff; outline-offset: -1px; }
.watermark { position: absolute; right: 48px; bottom: -14px; display: flex; align-items: center; gap: 4px; color: #f0f0f0; font: 500 33px/60px "Roboto", sans-serif; text-shadow: 0 0 2px #aaa; pointer-events: none; }
.watermark svg { width: 56px; height: 62px; }

.status { display: flex; align-items: center; height: 23px; padding: 0 0 0 14px; color: #2c456c; }
.status span { padding-right: 6px; }
.picked { margin-left: 16px; }
.views { margin-left: auto; display: flex; padding-right: 2px; }
.views button { width: 24px; height: 23px; display: flex; align-items: center; justify-content: center; }
.views .on { background: #cdeafa; border: 1px solid #36a5d8; width: 22px; }

.taskbar { display: flex; height: 40px; background: linear-gradient(90deg, #001721, #000c1d 85%); color: #fff; }
.start { width: 48px; display: flex; align-items: center; justify-content: center; }
.tasksearch { width: 288px; background: #f0f0f0; border: 1px solid #b6b9ba; display: flex; align-items: center; padding-left: 11px; gap: 10px; }
.tasksearch input { font-size: 14px; line-height: 20px; }
.tasksearch input::placeholder { color: #333; }
.apps { display: flex; gap: 1px; padding-left: 3px; }
.apps button { width: 48px; display: flex; align-items: center; justify-content: center; }
.apps .active { background: #2d3f48; box-shadow: inset 0 -3px #76b9ed; }
.apps .run { background: linear-gradient(#76b9ed, #76b9ed) center bottom / 40px 3px no-repeat; }
.tray { margin-left: auto; display: flex; align-items: center; gap: 8px; margin-right: 4px; padding-right: 20px; border-right: 1px solid #5b6470; }
.tray .i12 { margin-right: 2px; }
.clock { display: flex; flex-direction: column; width: 52px; text-align: center; line-height: 18px; margin-left: 2px; }
.notif { margin-left: 10px; }
```
